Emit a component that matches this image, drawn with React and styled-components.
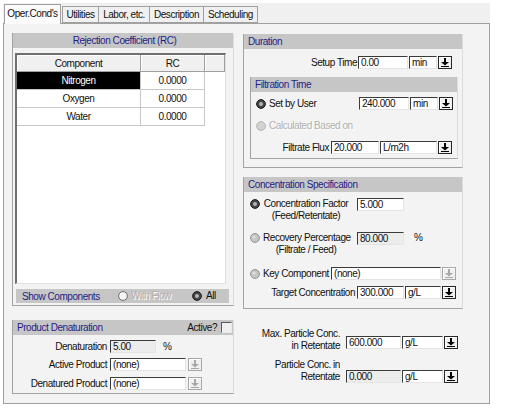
import React from 'react';
import styled, { createGlobalStyle } from 'styled-components';

const GlobalStyle = createGlobalStyle`
  body {
    margin: 0;
    background: #fff;
    font-family: 'Liberation Sans', Arial, sans-serif;
    font-size: 10px;
    letter-spacing: -0.45px;
    color: #111;
  }
`;

const Window = styled.div`
  margin: 3px 0 0 3px;
  width: 487px;
  height: 401px;
  background: #f0f0f0;
  display: flex;
  flex-direction: column;
`;

const TabStrip = styled.div`
  display: flex;
  align-items: flex-end;
  height: 21px;
  padding-left: 1px;
  position: relative;
  z-index: 1;
`;

const Tab = styled.div`
  box-sizing: border-box;
  width: ${p => p.$w}px;
  height: ${p => (p.$active ? 20 : 17)}px;
  margin-bottom: ${p => (p.$active ? 0 : 1)}px;
  margin-left: ${p => (p.$active ? 0 : -1)}px;
  margin-right: ${p => (p.$active ? 2 : 0)}px;
  border: 1px solid #a0a0a0;
  border-bottom: ${p => (p.$active ? 'none' : '1px solid #a0a0a0')};
  background: ${p => (p.$active ? '#fbfbfb' : '#f0f0f0')};
  display: flex;
  align-items: center;
  justify-content: center;
  padding-bottom: ${p => (p.$active ? 2 : 0)}px;
  white-space: nowrap;
`;

const Panel = styled.div`
  flex: 1;
  margin-top: -1px;
  border: 1px solid #a0a0a0;
  background: #f3f3f3;
  display: flex;
  gap: 9px;
  padding: 9px 0 0 8px;
`;

const Column = styled.div`
  display: flex;
  flex-direction: column;
  width: ${p => p.$w}px;
  padding-top: ${p => p.$top || 0}px;
`;

const GroupBox = styled.div`
  box-sizing: border-box;
  display: flex;
  flex-direction: column;
  height: ${p => (p.$h ? `${p.$h}px` : 'auto')};
  margin: ${p => p.$mt || 0}px ${p => p.$mr || 0}px 0 ${p => p.$ml || 0}px;
  padding-bottom: ${p => p.$pb || 0}px;
  border-left: 1px solid #a3a3a3;
  border-bottom: 1px solid #a3a3a3;
  border-right: 1px solid #dcdcdc;
`;

const GroupHeader = styled.div`
  height: 15px;
  line-height: 15px;
  background: #c6c6c6;
  color: #1e1e86;
  padding: 0 1px 0 4px;
  display: flex;
  align-items: center;
  justify-content: ${p => (p.$center ? 'center' : 'space-between')};
  white-space: nowrap;
`;

const Row = styled.div`
  display: flex;
  align-items: ${p => p.$align || 'center'};
  height: ${p => p.$h || 13}px;
  margin-top: ${p => p.$mt || 0}px;
  margin-left: ${p => p.$ml || 0}px;
`;

const Label = styled.span`
  flex: none;
  width: ${p => p.$w}px;
  margin-right: ${p => p.$gap ?? 2}px;
  text-align: right;
  white-space: nowrap;
  line-height: 13px;
`;

const TwoLine = styled.div`
  flex: none;
  width: ${p => p.$w}px;
  margin-left: ${p => p.$ml || 0}px;
  margin-right: ${p => p.$gap || 0}px;
  text-align: ${p => p.$align || 'center'};
  line-height: 12px;
  white-space: nowrap;
`;

const OptionHead = styled.div`
  flex: none;
  width: ${p => p.$w}px;
  display: flex;
  align-items: ${p => (p.$top ? 'flex-start' : 'center')};
  padding-left: ${p => p.$pl || 0}px;
  box-sizing: border-box;
  white-space: nowrap;
`;

const OptionText = styled.span`
  margin-left: 3px;
  white-space: nowrap;
  line-height: 12px;
  color: ${p => (p.$off ? '#b0b0b0' : '#111')};
  text-shadow: ${p => (p.$off ? '1px 1px 0 #fff' : 'none')};
`;

const Field = styled.div`
  flex: none;
  box-sizing: border-box;
  width: ${p => p.$w}px;
  height: 13px;
  margin-left: ${p => p.$ml || 0}px;
  margin-top: ${p => p.$mt || 0}px;
  border-top: 1px solid #3a3a3a;
  border-left: 1px solid #3a3a3a;
  border-right: 1px solid #e4e4e4;
  border-bottom: 1px solid #e4e4e4;
  background: ${p => (p.$off ? '#ececec' : '#fff')};
  padding-left: 2px;
  line-height: 11px;
  white-space: nowrap;
  overflow: hidden;
`;

const Suffix = styled.span`
  margin-left: ${p => p.$ml || 6}px;
`;

const DropButton = styled.div`
  flex: none;
  box-sizing: border-box;
  width: 14px;
  height: 13px;
  margin-left: ${p => p.$ml ?? 1}px;
  margin-top: ${p => p.$mt || 0}px;
  border: 1px solid ${p => (p.$off ? '#a8a8a8' : '#262626')};
  background: #f0f0f0;
  box-shadow: inset 1px 1px 0 #fff;
  display: flex;
  align-items: center;
  justify-content: center;
  color: ${p => (p.$off ? '#a8a8a8' : '#000')};
`;

const Table = styled.div`
  box-sizing: border-box;
  margin-left: 2px;
  width: 211px;
  height: 231px;
  background: #fff;
  border-top: 2px solid #6f6f6f;
  border-left: 2px solid #6f6f6f;
  border-right: 1px solid #e0e0e0;
  border-bottom: 1px solid #e0e0e0;
  display: grid;
  grid-template-columns: 124px 64px 1fr;
  grid-template-rows: 17px;
  grid-auto-rows: 18px;
  align-content: start;
`;

const HeadCell = styled.div`
  background: #f0f0f0;
  border-right: 1px solid #a0a0a0;
  border-bottom: 1px solid #a0a0a0;
  box-shadow: inset 1px 1px 0 #fff;
  display: flex;
  align-items: center;
  justify-content: center;
`;

const Cell = styled.div`
  background: ${p => (p.$selected ? '#000' : '#fff')};
  color: ${p => (p.$selected ? '#fff' : '#111')};
  border-right: ${p => (p.$blank ? 'none' : '1px solid #c8c8c8')};
  border-bottom: ${p => (p.$blank ? 'none' : '1px solid #c8c8c8')};
  display: flex;
  align-items: center;
  justify-content: center;
`;

const ShowBar = styled.div`
  margin: 5px 0 0 3px;
  width: 213px;
  height: 14px;
  background: #c6c6c6;
  display: flex;
  align-items: center;
  padding-left: 6px;
  box-sizing: border-box;
  color: #1e1e86;
`;

const BarLabel = styled.span`
  width: ${p => p.$w}px;
  flex: none;
  white-space: nowrap;
`;

const BarOption = styled.div`
  width: ${p => p.$w}px;
  flex: none;
  display: flex;
  align-items: center;
  color: #111;
`;

const CheckBox = styled.span`
  box-sizing: border-box;
  width: 11px;
  height: 11px;
  margin-left: 4px;
  border-top: 1px solid #5a5a5a;
  border-left: 1px solid #5a5a5a;
  border-right: 1px solid #e8e8e8;
  border-bottom: 1px solid #e8e8e8;
  background: #f0f0f0;
`;

const HeaderRight = styled.span`
  display: flex;
  align-items: center;
  color: #111;
`;

const Radio = ({ kind = 'on' }) => {
  const looks = {
    on: { ring: '#1e1e1e', fill: '#444', dot: '#b4b4b4' },
    off: { ring: '#8e8e8e', fill: '#c6c6c6', dot: null },
    disabled: { ring: '#b4b4b4', fill: '#d2d2d2', dot: null },
    hollow: { ring: '#6a6a6a', fill: '#f6f6f6', dot: null },
  }[kind];
  return (
    <svg width="10" height="10" viewBox="0 0 10 10" style={{ flex: 'none' }}>
      <circle cx="5" cy="5" r="4.4" fill={looks.fill} stroke={looks.ring} strokeWidth="1" />
      {looks.dot && <circle cx="5" cy="5" r="2" fill={looks.dot} />}
      {kind === 'off' && <circle cx="4" cy="4" r="1.6" fill="#dedede" />}
    </svg>
  );
};

const Arrow = () => (
  <svg width="8" height="9" viewBox="0 0 8 9" fill="currentColor">
    <rect x="3" y="0" width="2" height="4" />
    <polygon points="0,4 8,4 4,7.5" />
    <rect x="0" y="8" width="8" height="1" />
  </svg>
);

const tabs = [
  ['Oper.Cond\'s', 57, true],
  ['Utilities', 37],
  ['Labor, etc.', 52],
  ['Description', 55],
  ['Scheduling', 55],
];

const rcRows = [
  ['Nitrogen', '0.0000'],
  ['Oxygen', '0.0000'],
  ['Water', '0.0000'],
];

function UnitPicker({ unit, w, ml = 1 }) {
  return (
    <>
      <Field $w={w} $ml={ml}>{unit}</Field>
      <DropButton><Arrow /></DropButton>
    </>
  );
}

export default function App() {
  return (
    <>
      <GlobalStyle />
      <Window>
        <TabStrip>
          {tabs.map(([name, w, active]) => (
            <Tab key={name} $w={w} $active={active}>{name}</Tab>
          ))}
        </TabStrip>
        <Panel>
          <Column $w={222}>
            <GroupBox $h={273}>
              <GroupHeader $center>Rejection Coefficient (RC)</GroupHeader>
              <div style={{ height: 5 }} />
              <Table>
                <HeadCell>Component</HeadCell>
                <HeadCell>RC</HeadCell>
                <HeadCell />
                {rcRows.map(([name, rc], i) => (
                  <React.Fragment key={name}>
                    <Cell $selected={i === 0}>{name}</Cell>
                    <Cell>{rc}</Cell>
                    <Cell $blank />
                  </React.Fragment>
                ))}
              </Table>
              <ShowBar>
                <BarLabel $w={96}>Show Components</BarLabel>
                <BarOption $w={74}>
                  <Radio kind="hollow" />
                  <OptionText $off>With Flow</OptionText>
                </BarOption>
                <BarOption $w={30}>
                  <Radio kind="on" />
                  <OptionText style={{ marginLeft: 4 }}>All</OptionText>
                </BarOption>
              </ShowBar>
            </GroupBox>

            <GroupBox $mt={14} $pb={3}>
              <GroupHeader>
                <span>Product Denaturation</span>
                <HeaderRight>Active?<CheckBox /></HeaderRight>
              </GroupHeader>
              <Row $mt={5}>
                <Label $w={94} $gap={3}>Denaturation</Label>
                <Field $w={46} $off>5.00</Field>
                <Suffix $ml={7}>%</Suffix>
              </Row>
              <Row $mt={5}>
                <Label $w={94} $gap={3}>Active Product</Label>
                <Field $w={76}>(none)</Field>
                <DropButton $ml={2} $off><Arrow /></DropButton>
              </Row>
              <Row $mt={6}>
                <Label $w={94} $gap={3}>Denatured Product</Label>
                <Field $w={76}>(none)</Field>
                <DropButton $ml={2} $off><Arrow /></DropButton>
              </Row>
            </GroupBox>
          </Column>

          <Column $w={220} $top={1}>
            <GroupBox $pb={8}>
              <GroupHeader>Duration</GroupHeader>
              <Row $mt={7}>
                <Label $w={113} $gap={1}>Setup Time</Label>
                <Field $w={50}>0.00</Field>
                <UnitPicker unit="min" w={28} />
              </Row>
              <GroupBox $mt={8} $ml={6} $mr={4} $pb={4}>
                <GroupHeader>Filtration Time</GroupHeader>
                <Row $mt={5}>
                  <OptionHead $w={107} $pl={5}>
                    <Radio kind="on" />
                    <OptionText>Set by User</OptionText>
                  </OptionHead>
                  <Field $w={50} $ml={1}>240.000</Field>
                  <UnitPicker unit="min" w={28} />
                </Row>
                <Row $mt={10} $h={12}>
                  <OptionHead $w={107} $pl={5}>
                    <Radio kind="disabled" />
                    <OptionText $off>Calculated Based on</OptionText>
                  </OptionHead>
                </Row>
                <Row $mt={9}>
                  <Label $w={78} $gap={2}>Filtrate Flux</Label>
                  <Field $w={48}>20.000</Field>
                  <UnitPicker unit="L/m2h" w={57} />
                </Row>
              </GroupBox>
            </GroupBox>

            <GroupBox $mt={9} $pb={9}>
              <GroupHeader>Concentration Specification</GroupHeader>
              <Row $mt={6} $h={24} $align="flex-start">
                <OptionHead $w={113} $pl={6} $top>
                  <span style={{ marginTop: 1 }}><Radio kind="on" /></span>
                  <TwoLine $w={86} $ml={3}>Concentration Factor<br />(Feed/Retentate)</TwoLine>
                </OptionHead>
                <Field $w={47}>5.000</Field>
              </Row>
              <Row $mt={10} $h={24} $align="flex-start">
                <OptionHead $w={113} $pl={6} $top>
                  <span style={{ marginTop: 1 }}><Radio kind="off" /></span>
                  <TwoLine $w={86} $ml={3}>Recovery Percentage<br />(Filtrate / Feed)</TwoLine>
                </OptionHead>
                <Field $w={47} $off>80.000</Field>
                <Suffix $ml={10}>%</Suffix>
              </Row>
              <Row $mt={11}>
                <OptionHead $w={87} $pl={6}>
                  <Radio kind="off" />
                  <OptionText>Key Component</OptionText>
                </OptionHead>
                <Field $w={110}>(none)</Field>
                <DropButton $ml={1} $off><Arrow /></DropButton>
              </Row>
              <Row $mt={6}>
                <Label $w={111} $gap={2}>Target Concentration</Label>
                <Field $w={47}>300.000</Field>
                <UnitPicker unit="g/L" w={36} />
              </Row>
            </GroupBox>

            <Row $mt={19} $h={24} $align="flex-start">
              <TwoLine $w={97} $gap={6} $align="right">Max. Particle Conc.<br />in Retentate</TwoLine>
              <Field $w={55} $mt={8}>600.000</Field>
              <Field $w={41} $ml={1} $mt={8}>g/L</Field>
              <DropButton $mt={8}><Arrow /></DropButton>
            </Row>
            <Row $mt={7} $h={24} $align="flex-start">
              <TwoLine $w={97} $gap={6} $align="right">Particle Conc. in<br />Retentate</TwoLine>
              <Field $w={55} $mt={11} $off>0.000</Field>
              <Field $w={41} $ml={1} $mt={11}>g/L</Field>
              <DropButton $mt={11}><Arrow /></DropButton>
            </Row>
          </Column>
        </Panel>
      </Window>
    </>
  );
}
